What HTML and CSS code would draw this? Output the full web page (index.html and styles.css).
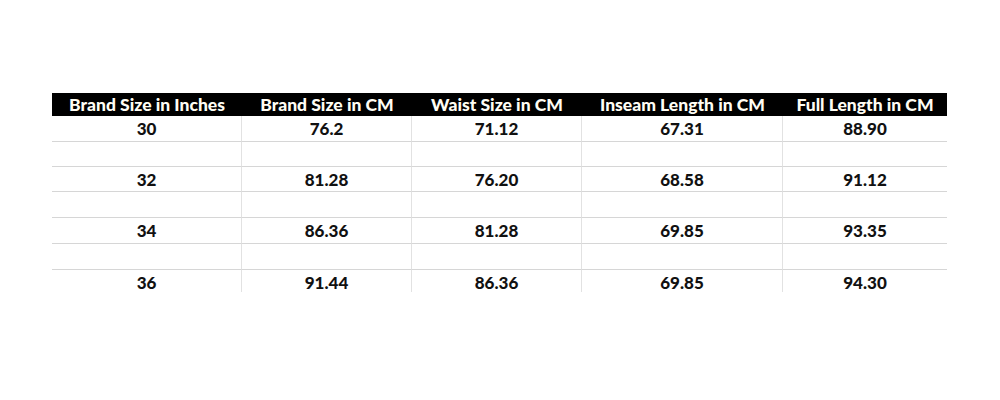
FILE: index.html
```html
<!DOCTYPE html>
<html>
<head>
<meta charset="utf-8">
<link rel="stylesheet" href="styles.css">
</head>
<body>
<div class="sheet">
  <div class="grid">
    <div class="hd">Brand Size in Inches</div>
    <div class="hd">Brand Size in CM</div>
    <div class="hd">Waist Size in CM</div>
    <div class="hd">Inseam Length in CM</div>
    <div class="hd">Full Length in CM</div>

    <div class="c">30</div><div class="c">76.2</div><div class="c">71.12</div><div class="c">67.31</div><div class="c">88.90</div>
    <div class="c"></div><div class="c"></div><div class="c"></div><div class="c"></div><div class="c"></div>
    <div class="c">32</div><div class="c">81.28</div><div class="c">76.20</div><div class="c">68.58</div><div class="c">91.12</div>
    <div class="c"></div><div class="c"></div><div class="c"></div><div class="c"></div><div class="c"></div>
    <div class="c">34</div><div class="c">86.36</div><div class="c">81.28</div><div class="c">69.85</div><div class="c">93.35</div>
    <div class="c"></div><div class="c"></div><div class="c"></div><div class="c"></div><div class="c"></div>
    <div class="c last">36</div><div class="c last">91.44</div><div class="c last">86.36</div><div class="c last">69.85</div><div class="c last">94.30</div>
  </div>
</div>
</body>
</html>
```

FILE: styles.css
```css
html, body {
  margin: 0;
  padding: 0;
  background: #ffffff;
}

body {
  font-family: "Lato", "Open Sans", sans-serif;
  font-weight: 900;
  color: #111111;
}

.sheet {
  margin: 93px 0 0 52px;
  width: 895px;
}

.grid {
  display: grid;
  grid-template-columns: 190px 170px 170px 201px 164px;
  grid-template-rows: 23px 26px 25px 25px 26px 26px 26px 22px;
}

.hd {
  background: #000000;
  color: #fffdf4;
  font-size: 17.5px;
  line-height: 23px;
  text-align: center;
  white-space: nowrap;
}

.c {
  font-size: 17px;
  display: flex;
  align-items: center;
  justify-content: center;
  border-bottom: 1px solid #d6d6d6;
  border-right: 1px solid #e2e2e2;
  box-sizing: border-box;
}

.c:nth-child(5n) {
  border-right: none;
}

.c.last {
  align-items: flex-start;
  line-height: 18px;
  padding-top: 4px;
  border-bottom: none;
}
```
